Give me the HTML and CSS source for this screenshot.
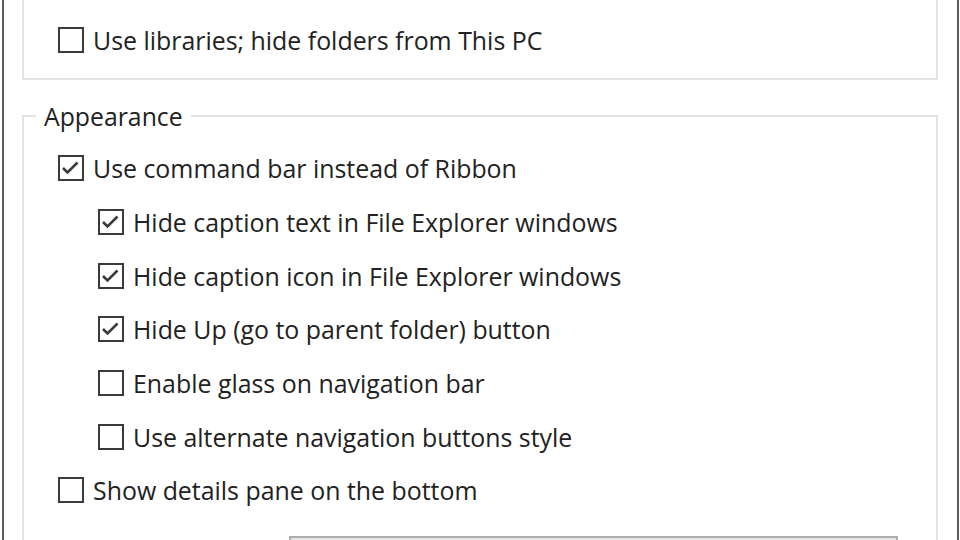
FILE: index.html
```html
<!DOCTYPE html>
<html>
<head>
<meta charset="utf-8">
<link rel="stylesheet" href="styles.css">
</head>
<body>
<div class="window">
  <div class="group group-top">
    <div class="row">
      <span class="box"></span>
      <span class="label">Use libraries; hide folders from This PC</span>
    </div>
  </div>
  <fieldset class="group group-appearance">
    <legend class="legend">Appearance</legend>
    <div class="row">
      <span class="box"><svg viewBox="0 0 22 22" class="tick"><polyline points="3,11 7.5,15.5 17.5,5.5"/></svg></span>
      <span class="label">Use command bar instead of Ribbon</span>
    </div>
    <div class="row sub">
      <span class="box"><svg viewBox="0 0 22 22" class="tick"><polyline points="3,11 7.5,15.5 17.5,5.5"/></svg></span>
      <span class="label">Hide caption text in File Explorer windows</span>
    </div>
    <div class="row sub">
      <span class="box"><svg viewBox="0 0 22 22" class="tick"><polyline points="3,11 7.5,15.5 17.5,5.5"/></svg></span>
      <span class="label">Hide caption icon in File Explorer windows</span>
    </div>
    <div class="row sub">
      <span class="box"><svg viewBox="0 0 22 22" class="tick"><polyline points="3,11 7.5,15.5 17.5,5.5"/></svg></span>
      <span class="label">Hide Up (go to parent folder) button</span>
    </div>
    <div class="row sub">
      <span class="box"></span>
      <span class="label">Enable glass on navigation bar</span>
    </div>
    <div class="row sub">
      <span class="box"></span>
      <span class="label">Use alternate navigation buttons style</span>
    </div>
    <div class="row">
      <span class="box"></span>
      <span class="label">Show details pane on the bottom</span>
    </div>
    <div class="combo-row">
      <div class="combo"></div>
    </div>
  </fieldset>
</div>
</body>
</html>
```

FILE: styles.css
```css
html, body {
  margin: 0;
  padding: 0;
  background: #ffffff;
}
body {
  width: 960px;
  height: 540px;
  overflow: hidden;
  font-family: "Open Sans", "Noto Sans", sans-serif;
  color: #222222;
}
.window {
  display: flow-root;
  box-sizing: border-box;
  margin-left: 2px;
  width: 957px;
  height: 540px;
  overflow: hidden;
  border-left: 2px solid #5c5c5c;
  border-right: 2px solid #5c5c5c;
  padding: 0 18px;
  background: #ffffff;
}
.group {
  box-sizing: border-box;
  width: 916px;
  border: 2px solid #e3e3e3;
}
.group-top {
  margin-top: -40px;
  padding: 53px 0 11px 34px;
  border-top: none;
}
.group-appearance {
  margin: 20px 0 0 0;
  padding: 10px 0 0 12px;
  min-width: 0;
  height: 460px;
}
.legend {
  padding: 0 8px;
  font-size: 24.8px;
  line-height: 32px;
  color: #222222;
}
.row {
  display: flex;
  align-items: center;
  height: 53.67px;
  gap: 9px;
}
.group-appearance .row {
  margin-left: 22px;
}
.group-appearance .row.sub {
  margin-left: 62px;
}
.box {
  box-sizing: border-box;
  flex: none;
  width: 26px;
  height: 26px;
  border: 2px solid #3a3a3a;
  background: #ffffff;
  display: flex;
}
.tick {
  width: 22px;
  height: 22px;
  fill: none;
  stroke: #3a3a3a;
  stroke-width: 2.6;
}
.label {
  font-size: 24.9px;
  line-height: 30px;
  white-space: nowrap;
}
.combo-row {
  padding: 19px 0 0 253px;
}
.combo {
  box-sizing: border-box;
  width: 609px;
  height: 40px;
  border: 2px solid #adadad;
  background: #e5e5e5;
}
```
